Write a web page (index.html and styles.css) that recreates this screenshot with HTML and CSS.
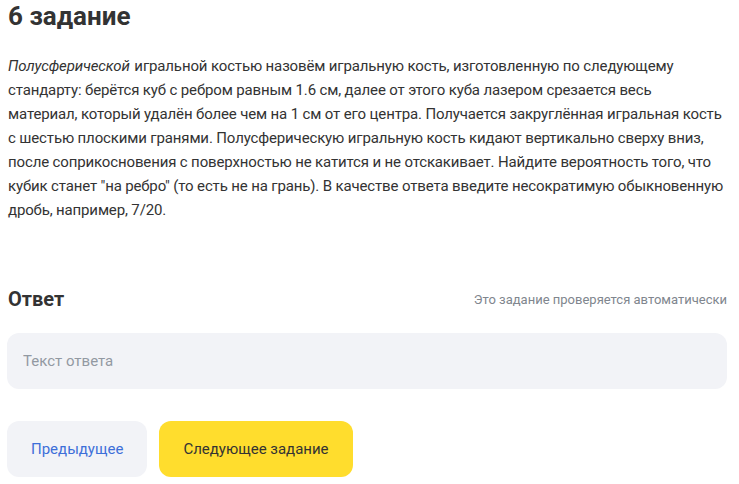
FILE: index.html
```html
<!DOCTYPE html>
<html lang="ru">
<head>
<meta charset="utf-8">
<link rel="stylesheet" href="styles.css">
</head>
<body>
<main class="task">
  <h1 class="task-title">6 задание</h1>
  <p class="task-text"><em>Полусферической</em> игральной костью назовём игральную кость, изготовленную по следующему<br>стандарту: берётся куб с ребром равным 1.6 см, далее от этого куба лазером срезается весь<br>материал, который удалён более чем на 1 см от его центра. Получается закруглённая игральная кость<br>с шестью плоскими гранями. Полусферическую игральную кость кидают вертикально сверху вниз,<br>после соприкосновения с поверхностью не катится и не отскакивает. Найдите вероятность того, что<br>кубик станет "на ребро" (то есть не на грань). В качестве ответа введите несократимую обыкновенную<br>дробь, например, 7/20.</p>
  <div class="answer-head">
    <h2 class="answer-title">Ответ</h2>
    <span class="answer-note">Это задание проверяется автоматически</span>
  </div>
  <input class="answer-input" type="text" placeholder="Текст ответа">
  <div class="actions">
    <button class="btn btn-secondary">Предыдущее</button>
    <button class="btn btn-primary">Следующее задание</button>
  </div>
</main>
</body>
</html>
```
FILE: styles.css
```css
* { box-sizing: border-box; }
body {
  margin: 0;
  background: #fff;
  font-family: Roboto, "Liberation Sans", sans-serif;
  color: #333333;
}
.task {
  width: 720px;
  margin-left: 7px;
  display: flex;
  flex-direction: column;
}
.task-title {
  margin: 0;
  padding-left: 1px;
  font-size: 26px;
  line-height: 32px;
  font-weight: 700;
}
.task-text {
  margin: 22px 0 0;
  padding-left: 1px;
  font-size: 15px;
  line-height: 24px;
  letter-spacing: -0.14px;
  white-space: nowrap;
}
.task-text em { font-style: italic; margin-right: 1px; }
.answer-head {
  margin-top: 63px;
  display: flex;
  justify-content: space-between;
  align-items: center;
}
.answer-title {
  margin: 0;
  padding-left: 1px;
  font-size: 20px;
  line-height: 28px;
  font-weight: 700;
}
.answer-note {
  font-size: 13px;
  color: #80868e;
}
.answer-input {
  margin-top: 20px;
  height: 56px;
  border: 0;
  border-radius: 12px;
  background: #f2f3f7;
  padding: 0 16px;
  font-family: inherit;
  font-size: 15px;
  color: #333;
  outline: none;
}
.answer-input::placeholder { color: #9299a2; }
.actions {
  margin-top: 32px;
  display: flex;
  gap: 12px;
}
.btn {
  height: 56px;
  border: 0;
  border-radius: 12px;
  font-family: inherit;
  font-size: 15px;
  padding: 0 24px;
  cursor: pointer;
}
.btn-secondary {
  width: 140px;
  background: #f2f3f7;
  color: #3d6fd9;
}
.btn-primary {
  width: 194px;
  background: #ffdd2d;
  color: #333333;
}
```
